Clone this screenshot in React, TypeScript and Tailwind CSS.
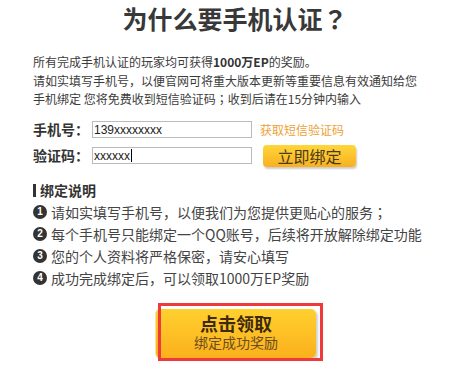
import React from "react";

const cjk = { fontFamily: '"Noto Sans CJK SC", "Liberation Sans", sans-serif' };
const latin = { fontFamily: '"Liberation Sans", "Noto Sans CJK SC", sans-serif' };
const tc = { fontFamily: '"Noto Sans CJK TC", "Noto Sans CJK SC", sans-serif' };

function Num({ n }: { n: string }) {
  return (
    <span
      className="flex h-[14px] w-[14px] shrink-0 items-center justify-center rounded-full bg-[#333] text-[10px] font-bold leading-none text-white"
      style={latin}
    >
      {n}
    </span>
  );
}

export default function App() {
  const items: React.ReactNode[] = [
    <>
      请如实填写手机号，以便我们为您提供更贴心的服务<span style={tc}>；</span>
    </>,
    "每个手机号只能绑定一个QQ账号，后续将开放解除绑定功能",
    "您的个人资料将严格保密，请安心填写",
    "成功完成绑定后，可以领取1000万EP奖励",
  ];
  return (
    <div className="h-[371px] w-[464px] overflow-hidden bg-white" style={cjk}>
      <h1 className="pl-[6px] text-center text-[25px] font-bold leading-[36px] text-[#383838]">
        为什么要手机认证<span style={tc}>？</span>
      </h1>

      <div className="mt-[17px] pl-[33px] text-[12px] leading-[18.5px] text-[#3c3c3c]">
        <p>
          所有完成手机认证的玩家均可获得<b className="font-bold text-[#333]">1000万EP</b>的奖励。
        </p>
        <p>请如实填写手机号，以便官网可将重大版本更新等重要信息有效通知给您</p>
        <p>
          手机绑定 您将免费收到短信验证码<span style={tc}>；</span>收到后请在15分钟内输入
        </p>
      </div>

      <div className="mt-[10px] flex flex-col gap-[4px] pl-[33px]">
        <div className="flex h-[22px] items-center">
          <span className="w-[59px] text-[14px] font-semibold text-[#333]">手机号：</span>
          <div
            className="flex h-[17px] w-[160px] items-center border border-[#bbb] pl-[1px] text-[12px] text-[#222]"
            style={latin}
          >
            139xxxxxxxx
          </div>
          <span className="ml-[8px] text-[12px] text-[#eea236]">获取短信验证码</span>
        </div>
        <div className="flex h-[22px] items-center">
          <span className="w-[59px] text-[14px] font-semibold text-[#333]">验证码：</span>
          <div
            className="flex h-[17px] w-[160px] items-center border border-[#bbb] pl-[1px] text-[12px] text-[#222]"
            style={latin}
          >
            xxxxxx
            <span className="ml-px h-[13px] w-px bg-black" />
          </div>
          <div className="ml-[11px] flex h-[22px] w-[93px] items-center justify-center rounded-[4px] bg-gradient-to-b from-[#ffd63a] to-[#f8b020] text-[16px] leading-none text-[#4a3a1a] shadow-[1px_2px_2px_rgba(0,0,0,0.2)]">
            立即绑定
          </div>
        </div>
      </div>

      <div className="mt-[14px] flex h-[20px] items-center pl-[33px]">
        <span className="h-[13px] w-[3px] bg-[#333]" />
        <span className="ml-[4px] text-[14px] font-semibold text-[#333]">绑定说明</span>
      </div>

      <ul className="pl-[33px] text-[14px] leading-[22px] text-[#444]">
        {items.map((t, i) => (
          <li key={i} className="flex items-center gap-[4px]">
            <Num n={String(i + 1)} />
            <span>{t}</span>
          </li>
        ))}
      </ul>

      <div className="relative ml-[155px] mt-[20px] h-[49px] w-[161px]">
        <div className="flex h-full w-full flex-col items-center rounded-[5px] border-l border-[#f8e3a0] bg-gradient-to-b from-[#ffd02e] to-[#fbb01c] pt-[5px] shadow-[2px_2px_2px_rgba(0,0,0,0.18)]">
          <span className="text-[18px] font-bold leading-[19px] text-[#3d2a10]">点击领取</span>
          <span className="mt-px text-[14px] leading-[17px] text-[#6b4d1f]">绑定成功奖励</span>
        </div>
        <div className="absolute left-[3px] top-[-6px] h-[58px] w-[165px] border-[3px] border-[#ee3a3a]" />
      </div>
    </div>
  );
}
